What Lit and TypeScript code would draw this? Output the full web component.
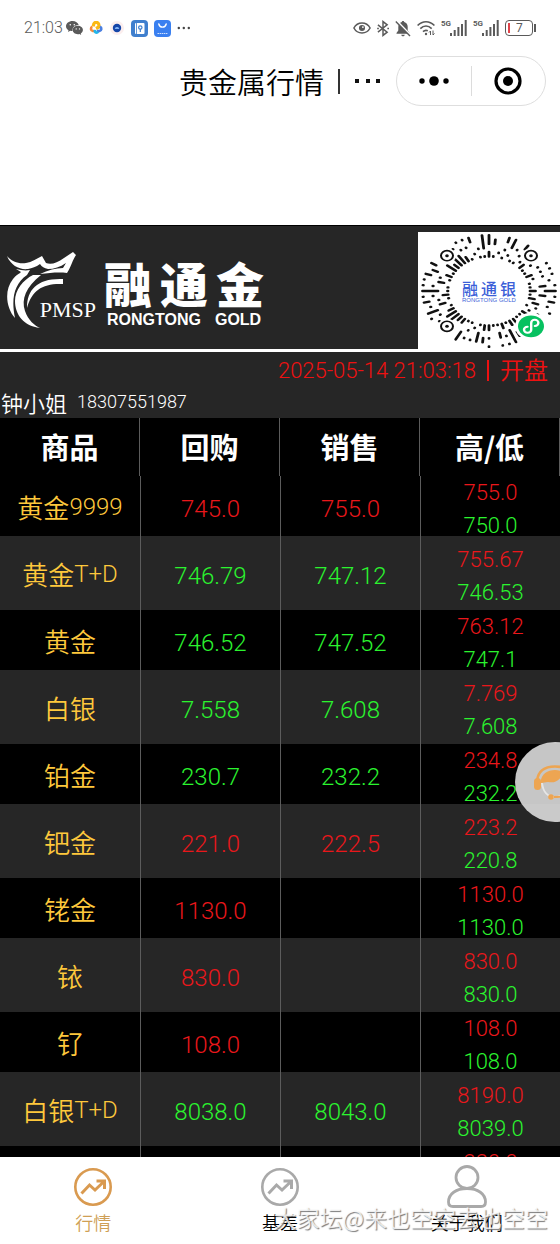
import { LitElement, html, svg, css, nothing } from "lit";
import { customElement, state } from "lit/decorators.js";
import { classMap } from "lit/directives/class-map.js";

type Trend = "up" | "down";

interface Quote {
  name: string;
  code?: string;
  buy: string;
  sell: string;
  high: string;
  low: string;
  trend: Trend;
}

const QUOTES: Quote[] = [
  { name: "黄金", code: "9999", buy: "745.0", sell: "755.0", high: "755.0", low: "750.0", trend: "up" },
  { name: "黄金", code: "T+D", buy: "746.79", sell: "747.12", high: "755.67", low: "746.53", trend: "down" },
  { name: "黄金", buy: "746.52", sell: "747.52", high: "763.12", low: "747.1", trend: "down" },
  { name: "白银", buy: "7.558", sell: "7.608", high: "7.769", low: "7.608", trend: "down" },
  { name: "铂金", buy: "230.7", sell: "232.2", high: "234.8", low: "232.2", trend: "down" },
  { name: "钯金", buy: "221.0", sell: "222.5", high: "223.2", low: "220.8", trend: "up" },
  { name: "铑金", buy: "1130.0", sell: "", high: "1130.0", low: "1130.0", trend: "up" },
  { name: "铱", buy: "830.0", sell: "", high: "830.0", low: "830.0", trend: "up" },
  { name: "钌", buy: "108.0", sell: "", high: "108.0", low: "108.0", trend: "up" },
  { name: "白银", code: "T+D", buy: "8038.0", sell: "8043.0", high: "8190.0", low: "8039.0", trend: "down" },
  { name: "", buy: "", sell: "", high: "220.0", low: "", trend: "up" },
];

/* One entry per spoke of the round code, clockwise from the top: slots from the inside out, "#" filled. */
const SPOKES = [
  "##.###", "#..##.", ".#....", "#.#.##", ".#.###", "#..#..", "#.#.##", ".#.##.", "##.#..", "#.#...",
  "#..#.#", "##.#.#", ".#.#.#", "#...#.", "#.##.#", "##.###", "#.##.#", "##..##", ".##.#.", "#.#..#",
  ".#.#..", "##....", "#.....", "#.....", "##....", "##.##.", "#.####", "##.#.#", "#.##.#", "#.....",
  "##.#.#", "##.##.", "#.###.", ".#..#.", "#.#.#.", "#..###", "##....", "##....", "###...", "###.#.",
  "##.#.#", "#..###", ".##.#.", "#.#.##", "##.#.#", "#.####", "#..#.#", ".##..#", "#.#.##", "##.##.",
  "#...##", "###...", "##....", "###...", "###.#.", "##.#.#", "#..#.#", ".#..##", "#.#...", "#.####",
];

@customElement("round-code")
export class RoundCode extends LitElement {
  static styles = css`
    :host {
      display: grid;
      width: 142px;
      height: 118px;
      background: #fff;
      place-items: center;
    }
    .art,
    .words {
      grid-area: 1 / 1;
    }
    .art {
      width: 138px;
      height: 116px;
      display: block;
    }
    .words {
      display: flex;
      flex-direction: column;
      align-items: center;
      color: #3c5fd8;
    }
    .cn {
      display: flex;
      gap: 3px;
      font: 500 16px/17px "Noto Sans CJK SC", sans-serif;
    }
    .en {
      font: 6px/6px "Liberation Sans", sans-serif;
    }
  `;

  private spoke(slots: string, index: number) {
    const angle = (index * 6 * Math.PI) / 180;
    const x = Math.sin(angle);
    const y = -Math.cos(angle);
    const parts = [...slots.matchAll(/#+/g)].map((run) => {
      const from = 41 + run.index! * 5;
      const to = from + (run[0].length - 1) * 5 + 0.5;
      return `M${(x * from).toFixed(1)} ${(y * from).toFixed(1)}L${(x * to).toFixed(1)} ${(y * to).toFixed(1)}`;
    });
    return svg`<path d=${parts.join("")} />`;
  }

  render() {
    const eye = (x: number, y: number) => svg`
      <circle cx=${x} cy=${y} r="9" fill="#fff" />
      <circle cx=${x} cy=${y} r="6" fill="#fff" stroke="#111" stroke-width="2" />
      <circle cx=${x} cy=${y} r="1.8" fill="#111" />`;
    return html`
      <svg class="art" viewBox="-69 -69 138 138" preserveAspectRatio="none" aria-hidden="true">
        <g stroke="#111" stroke-width="2.8" stroke-linecap="round" fill="none">
          ${SPOKES.map((s, i) => this.spoke(s, i))}
        </g>
        ${eye(-42, -42)} ${eye(42, -42)} ${eye(-42, 42)}
        <circle cx="42" cy="42" r="16" fill="#fff" />
        <circle cx="42" cy="42" r="13" fill="#07c160" />
        <path
          d="M38.500 42.500a3.600 3.600 0 1 0 3.700 3.500v-8a3.600 3.600 0 1 1 3.700 3.500"
          fill="none" stroke="#fff" stroke-width="2.400" stroke-linecap="round" />
      </svg>
      <div class="words">
        <span class="cn"><span>融</span><span>通</span><span>银</span></span>
        <span class="en">RONGTONG GOLD</span>
      </div>
    `;
  }
}

@customElement("status-bar")
export class StatusBar extends LitElement {
  static styles = css`
    :host {
      display: flex;
      justify-content: space-between;
      align-items: center;
      height: 56px;
      padding: 0 24px;
      color: #5a5a5a;
      font: 300 15px/20px "Noto Sans CJK SC", Roboto, sans-serif;
    }
    .group {
      display: flex;
      align-items: center;
      gap: 6px;
    }
    .time {
      font: 300 16px/20px Roboto, sans-serif;
      width: 36px;
    }
    svg {
      display: block;
    }
    .net {
      display: flex;
      align-items: flex-start;
    }
    .gen {
      width: 9px;
      font: 700 8px/8px Roboto, sans-serif;
    }
    .battery {
      display: flex;
      align-items: center;
      gap: 1px;
    }
    .cell {
      box-sizing: border-box;
      display: flex;
      align-items: center;
      gap: 6px;
      width: 28px;
      height: 16px;
      padding: 2px;
      border: 1px solid #5a5a5a;
      border-radius: 4px;
      font: 400 12px/12px Roboto, sans-serif;
    }
    .level {
      width: 2px;
      height: 10px;
      background: #e0444a;
    }
    .tip {
      width: 2px;
      height: 8px;
      background: #5a5a5a;
    }
  `;

  private signal() {
    return html`<span class="net">
      <span class="gen">5G</span>
      <svg width="17" height="17" viewBox="0 0 17 17" fill="#5a5a5a" aria-hidden="true">
        <path d="M0 13h2v3H0zM3.700 10h2v6h-2zM7.400 7h2v9h-2zM11 4h2v12h-2zM14.700 0h2v16h-2z" />
      </svg>
    </span>`;
  }

  render() {
    return html`
      <div class="group">
        <span class="time">21:03</span>
        <svg width="17" height="14" viewBox="0 0 17 14" aria-hidden="true">
          <path d="M6.500 0C2.900 0 0 2.300 0 5.200c0 1.700 1 3.100 2.500 4L2 11l2.200-1.200c.7.2 1.500.3 2.300.3C6 6.500 8.700 4 12.700 4 12.100 1.700 9.600 0 6.500 0z" fill="#5a5a5a" />
          <path d="M11.800 4.800c-2.900 0-5.100 1.900-5.100 4.200s2.200 4.200 5.100 4.200c.6 0 1.200-.1 1.700-.2l1.700 1-.4-1.500C16 11.700 16.900 10.400 16.900 9c0-2.300-2.300-4.200-5.100-4.200z" fill="#5a5a5a" />
          <g fill="#fff"><circle cx="4.300" cy="3.800" r=".8" /><circle cx="8.300" cy="3.800" r=".8" /><circle cx="10.200" cy="7.900" r=".7" /><circle cx="13.500" cy="7.900" r=".7" /></g>
        </svg>
        <svg width="14" height="14" viewBox="0 0 14 14" aria-hidden="true">
          <path d="M4.500 5.500V4a2.700 2.700 0 0 1 5.400 0v2L7 7.500" fill="none" stroke="#fbb914" stroke-width="3.200" />
          <path d="M6.500 10H3.800a2.200 2.200 0 0 1-.5-4.200" fill="none" stroke="#f58a3c" stroke-width="2.600" />
          <path d="M11 5.800a2.200 2.200 0 0 1-.5 4.200H8" fill="none" stroke="#4a7fe0" stroke-width="2.600" />
          <path d="M6 9v1.700a1.700 1.700 0 0 0 3 0" fill="none" stroke="#22b6ea" stroke-width="2.800" />
        </svg>
        <svg width="16" height="16" viewBox="0 0 16 16" aria-hidden="true">
          <circle cx="8" cy="8" r="7" fill="#fbeeee" />
          <circle cx="8" cy="8" r="4.200" fill="#1546a8" />
          <path d="M5.800 9c0-2.600 4.400-2.600 4.400 0z" fill="#7db0f4" />
        </svg>
        <svg width="17" height="17" viewBox="0 0 17 17" aria-hidden="true">
          <rect width="17" height="17" rx="4" fill="#3f7fce" />
          <rect x="4" y="3" width="9.500" height="11" rx="1" fill="#fff" />
          <path d="M5.500 3v11" stroke="#3f7fce" stroke-width=".8" />
          <circle cx="9.300" cy="7.500" r="1.700" fill="none" stroke="#3f7fce" stroke-width="1.200" />
          <path d="M9.300 9v3" stroke="#3f7fce" stroke-width="1.200" />
        </svg>
        <svg width="17" height="17" viewBox="0 0 17 17" aria-hidden="true">
          <rect width="17" height="17" rx="4" fill="#3a80f0" />
          <path d="M4.800 4c1 4.200 6.400 4.200 7.400 0" fill="none" stroke="#fff" stroke-width="1.400" stroke-linecap="round" />
          <path d="M3.500 13.500h10" stroke="#cfe0ff" stroke-width="1.200" stroke-dasharray="1.500 .6" />
        </svg>
        <svg width="15" height="4" viewBox="0 0 15 4" fill="#444" aria-hidden="true">
          <circle cx="1.800" cy="2" r="1.200" /><circle cx="6.800" cy="2" r="1.200" /><circle cx="11.800" cy="2" r="1.200" />
        </svg>
      </div>
      <div class="group">
        <svg width="18" height="14" viewBox="0 0 20 14" fill="none" stroke="#5a5a5a" aria-hidden="true">
          <path d="M1 7c4-7.500 14-7.500 18 0-4 7.500-14 7.500-18 0z" stroke-width="1.700" />
          <circle cx="10" cy="7" r="3.400" fill="#5a5a5a" stroke="none" />
          <circle cx="11" cy="6" r="1" fill="#fff" stroke="none" />
        </svg>
        <svg width="12" height="17" viewBox="0 0 13 17" fill="none" stroke="#5a5a5a" stroke-width="1.600" aria-hidden="true">
          <path d="M1 4.500l10 8L6.500 16V1L11 4.500l-10 8" />
          <path d="M.2 8.500h1.800M11.200 8.500h1.800" />
        </svg>
        <svg width="16" height="17" viewBox="0 0 16 17" aria-hidden="true">
          <path d="M8 1c-.8 0-1.200.5-1.200 1.100C4.500 2.700 3.300 4.500 3.300 7v3.500L1.500 13v.7h13V13l-1.800-2.500V7c0-2.500-1.200-4.300-3.500-4.900C9.200 1.500 8.800 1 8 1zM6.200 14.700c.6 2 3 2 3.600 0z" fill="#5a5a5a" />
          <path d="M1.800 1l14.500 15" stroke="#fff" stroke-width="2" />
          <path d="M.8 1.500L15 16" stroke="#5a5a5a" stroke-width="1.400" />
        </svg>
        <svg width="18" height="16" viewBox="0 0 18 16" fill="none" stroke="#5a5a5a" stroke-width="1.700" aria-hidden="true">
          <path d="M.6 5.500c5-5 11.800-5 16.800 0M3.300 8.600c3.500-3.400 7.900-3.400 11.400 0M6 11.600c1.400-1.300 3.200-1.600 4.800-.9" />
          <circle cx="9" cy="14" r="1.200" fill="#5a5a5a" stroke="none" />
          <path d="M13.500 15v-4l-1.500 1.500M16 10.500v4.500l1.500-1.500" stroke-width="1" />
        </svg>
        ${this.signal()} ${this.signal()}
        <span class="battery">
          <span class="cell"><span class="level"></span>7</span>
          <span class="tip"></span>
        </span>
      </div>
    `;
  }
}

@customElement("brand-banner")
export class BrandBanner extends LitElement {
  static styles = css`
    :host {
      display: flex;
      justify-content: space-between;
      box-sizing: border-box;
      height: 127px;
      padding-top: 6px;
      border-top: 1px solid #000;
      border-bottom: 3px solid #fff;
      background: #262626;
      color: #fff;
    }
    .brand {
      display: flex;
      padding: 20px 0 0 6px;
      gap: 8px;
    }
    .mark {
      display: grid;
      width: 90px;
      height: 78px;
    }
    .dragon,
    .initials {
      grid-area: 1 / 1;
    }
    .dragon {
      display: block;
    }
    .initials {
      align-self: end;
      justify-self: end;
      padding-bottom: 8px;
      font: 22px/24px "Liberation Serif", serif;
    }
    .names {
      display: flex;
      flex-direction: column;
      gap: 2px;
    }
    .cn {
      display: flex;
      gap: 8px;
      padding-top: 4px;
      font: 900 48px/52px "Noto Sans CJK SC", sans-serif;
    }
    .en {
      display: flex;
      gap: 14px;
      padding-left: 3px;
      font: 700 16px/20px "Liberation Sans", sans-serif;
    }
  `;

  render() {
    return html`
      <div class="brand">
        <div class="mark">
          <svg class="dragon" width="72" height="78" viewBox="0 0 72 78" fill="#fff" aria-hidden="true">
            <path d="M1 4c5 6 12 8 19 7 6-1 10-4 16-7l4 7c5 2 11 0 18-5L67 0l3 3c-3 4-5 12-9 18-9-1-17 0-27 1 8-4 16-6 23-6l3-5c-6 4-12 6-18 6-4-1-6-2-8-5-4 3-8 4-12 5C14 18 5 14 1 4z" />
            <path d="M10 17c5 1 9 2 14 1l-3 5C8 32 5 47 9 66 0 56-2 38 7 27c3-4 6-5 8-7z" />
            <path d="M57 27v5C37 31 26 38 21 56c0-19 11-30 36-29z" />
            <path d="M27 23h8C20 35 15 47 19 59c3 9 10 15 15 17C18 74 9 63 9 49c0-11 8-21 18-26z" />
          </svg>
          <span class="initials">PMSP</span>
        </div>
        <div class="names">
          <div class="cn"><span>融</span><span>通</span><span>金</span></div>
          <div class="en"><span>RONGTONG</span><span>GOLD</span></div>
        </div>
      </div>
      <round-code></round-code>
    `;
  }
}

@customElement("app-root")
export class AppRoot extends LitElement {
  @state() private tab = 0;

  static styles = css`
    :host {
      display: flex;
      flex-direction: column;
      position: relative;
      height: 100vh;
      overflow: hidden;
      background: #fff;
      color: #000;
      font-family: "Noto Sans CJK SC", sans-serif;
      font-weight: 350;
    }
    button {
      margin: 0;
      padding: 0;
      border: 0;
      background: none;
      font: inherit;
      color: inherit;
    }
    .nav {
      display: flex;
      align-items: center;
      justify-content: flex-end;
      gap: 14px;
      padding: 0 14px 119px 0;
    }
    .title {
      display: flex;
      align-items: center;
      gap: 14px;
      margin: 0;
      font-size: 29px;
      font-weight: 350;
      line-height: 50px;
    }
    .bar {
      width: 2px;
      height: 25px;
      background: #333;
    }
    .capsule {
      display: grid;
      grid-template-columns: 1fr 1px 1fr;
      align-items: center;
      box-sizing: border-box;
      width: 150px;
      height: 50px;
      border: 1px solid #dedede;
      border-radius: 25px;
    }
    .capsule button {
      display: grid;
      place-items: center;
    }
    .split {
      height: 30px;
      background: #dcdcdc;
    }
    .board {
      flex: 1;
      min-height: 0;
      overflow: hidden;
      background: #262626;
      color: #fff;
    }
    .clock {
      display: flex;
      align-items: center;
      justify-content: flex-end;
      gap: 11px;
      height: 36px;
      padding-right: 12px;
      color: #ee1111;
      font-size: 22px;
    }
    .clock .rule {
      width: 2px;
      height: 21px;
      background: #ee1111;
    }
    .clock time,
    .phone,
    .code,
    .quotes td {
      font-family: Roboto, sans-serif;
      font-weight: 350;
    }
    .clock .state {
      padding-bottom: 2px;
      font-size: 24px;
      line-height: 32px;
    }
    .contact {
      display: flex;
      align-items: center;
      gap: 10px;
      box-sizing: border-box;
      height: 30px;
      padding: 0 0 2px 1px;
      font-size: 22px;
      line-height: 28px;
    }
    .phone {
      font-size: 18px;
    }
    .quotes,
    .quotes thead {
      display: block;
    }
    .quotes tbody {
      display: grid;
      gap: 7px;
    }
    .quotes tr {
      display: grid;
      grid-template-columns: repeat(4, 1fr);
      height: 60px;
    }
    .quotes th,
    .quotes td {
      display: flex;
      align-items: center;
      justify-content: center;
      box-sizing: border-box;
      padding: 0 0 2px;
      border-left: 1px solid #5c5c5c;
      font-size: 24px;
    }
    .quotes tbody th {
      border-left: 0;
      padding-bottom: 7px;
      font-size: 26px;
      font-weight: 350;
      color: #fec83c;
    }
    .quotes thead tr {
      height: 58px;
      background: #000;
    }
    .quotes thead th {
      border-left: 0;
      border-right: 1px solid #5c5c5c;
      font-size: 29px;
      font-weight: 700;
    }
    .quotes .odd {
      background: #000;
    }
    .quotes .code {
      font-size: 24px;
    }
    .quotes .range {
      flex-direction: column;
      font-size: 22px;
      line-height: 33px;
    }
    .up {
      color: #ea171b;
    }
    .down {
      color: #2bf42f;
    }
    .service {
      position: absolute;
      right: -35px;
      top: 742px;
      display: grid;
      place-items: center;
      width: 80px;
      height: 80px;
      border-radius: 50%;
      background: rgba(225, 225, 225, 0.88);
    }
    .tabs {
      display: grid;
      grid-template-columns: repeat(3, 1fr);
      height: 87px;
      background: #fff;
    }
    .tab {
      display: flex;
      flex-direction: column;
      align-items: center;
      padding-top: 8px;
      color: #000;
      font-size: 18px;
      line-height: 26px;
      text-decoration: none;
    }
    .tab svg {
      display: block;
      color: #a9a9a9;
    }
    .tab.active {
      color: #cf9f55;
    }
    .tab.active svg {
      color: #d99a50;
    }
    .watermark {
      position: absolute;
      right: 12px;
      bottom: 10px;
      color: rgba(255, 255, 255, 0.8);
      font-size: 23px;
      line-height: 34px;
      white-space: nowrap;
      text-shadow: 1px 1px 1px #777;
      pointer-events: none;
    }
  `;

  private trendIcon() {
    return html`<svg width="44" height="44" viewBox="0 0 44 44" fill="none" stroke="currentColor" stroke-width="2.600" aria-hidden="true">
      <circle cx="22" cy="22" r="17.700" />
      <path d="M10.500 28.500l8-8.500 5.500 5 9-8.500M25.500 16h8v8" stroke-width="3" />
    </svg>`;
  }

  private personIcon() {
    return html`<svg width="44" height="44" viewBox="0 0 44 44" fill="none" stroke="currentColor" stroke-width="2.800" aria-hidden="true">
      <circle cx="22" cy="12.500" r="11" />
      <path d="M22 23.500c-11 0-18.500 5.500-18.500 13.500 0 3 1 4.500 4.500 4.500h28c3.500 0 4.500-1.500 4.500-4.500 0-8-7.500-13.500-18.500-13.500z" />
    </svg>`;
  }

  private row(q: Quote, i: number) {
    return html`<tr class=${classMap({ odd: i % 2 === 0 })}>
      <th scope="row">${q.name}${q.code ? html`<span class="code">${q.code}</span>` : nothing}</th>
      <td class=${q.trend}>${q.buy}</td>
      <td class=${q.trend}>${q.sell}</td>
      <td class="range"><span class="up">${q.high}</span><span class="down">${q.low || "\u00a0"}</span></td>
    </tr>`;
  }

  private select(event: Event, index: number) {
    event.preventDefault();
    this.tab = index;
  }

  render() {
    const tabs = [
      { label: "行情", icon: this.trendIcon() },
      { label: "基差", icon: this.trendIcon() },
      { label: "关于我们", icon: this.personIcon() },
    ];
    return html`
      <status-bar></status-bar>
      <header class="nav">
        <h1 class="title">
          <span>贵金属行情</span><span class="bar"></span>
          <svg width="28" height="6" viewBox="0 0 28 6" aria-hidden="true">
            <path d="M1 1h4v4H1zM12 1h4v4h-4zM22 1h4v4h-4z" fill="#111" />
          </svg>
        </h1>
        <div class="capsule">
          <button aria-label="更多">
            <svg width="30" height="12" viewBox="0 0 30 12" aria-hidden="true">
              <circle cx="3" cy="6" r="2.700" /><circle cx="15" cy="6" r="4.800" /><circle cx="27" cy="6" r="2.700" />
            </svg>
          </button>
          <span class="split"></span>
          <button aria-label="关闭">
            <svg width="28" height="28" viewBox="0 0 28 28" aria-hidden="true">
              <circle cx="14" cy="14" r="12" fill="none" stroke="#000" stroke-width="3.200" />
              <circle cx="14" cy="14" r="5" />
            </svg>
          </button>
        </div>
      </header>
      <main class="board">
        <brand-banner></brand-banner>
        <div class="clock">
          <time datetime="2025-05-14T21:03:18">2025-05-14 21:03:18</time>
          <span class="rule"></span>
          <span class="state">开盘</span>
        </div>
        <div class="contact"><span>钟小姐</span><span class="phone">18307551987</span></div>
        <table class="quotes">
          <thead>
            <tr><th scope="col">商品</th><th scope="col">回购</th><th scope="col">销售</th><th scope="col">高/低</th></tr>
          </thead>
          <tbody>
            ${QUOTES.map((q, i) => this.row(q, i))}
          </tbody>
        </table>
      </main>
      <nav class="tabs">
        ${tabs.map(
          (t, i) => html`<a
            href="#"
            class=${classMap({ tab: true, active: i === this.tab })}
            @click=${(e: Event) => this.select(e, i)}
            >${t.icon}<span>${t.label}</span></a
          >`,
        )}
      </nav>
      <button class="service" aria-label="客服">
        <svg width="44" height="44" viewBox="0 0 44 44" fill="#eda552" aria-hidden="true">
          <path d="M4 21C5 11 12 6.500 22 6.500S39 11 40 21" fill="none" stroke="#eda552" stroke-width="2.500" />
          <rect x="1" y="18" width="7" height="12" rx="3.500" />
          <rect x="36" y="18" width="7" height="12" rx="3.500" />
          <path d="M9 23c1 9 6 14 13 14s12-5 13-14" fill="none" stroke="#e6e6e6" stroke-width="2" />
          <path d="M8 23c-1-8 6-13 14-13s15 5 14 13c-4 0-7-2-8-6-4 5-8 6-13 5-3 0-4 1-7 1z" />
          <path d="M38 30c-2 5-7 7-17 7" fill="none" stroke="#eda552" stroke-width="2" />
          <circle cx="18" cy="37" r="2.800" />
        </svg>
      </button>
      <div class="watermark">大家坛@来也空空去也空空</div>
    `;
  }
}
